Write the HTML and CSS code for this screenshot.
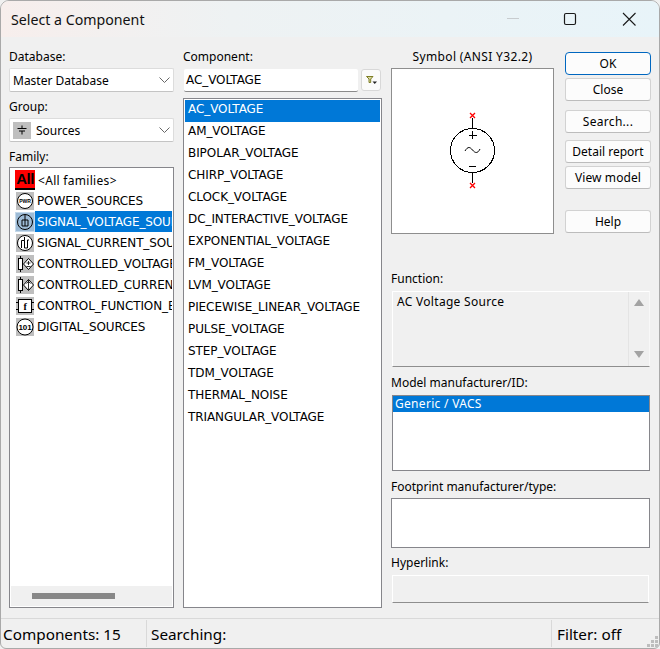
FILE: index.html
```html
<!DOCTYPE html>
<html lang="en">
<head>
<meta charset="utf-8">
<title>Select a Component</title>
<link rel="stylesheet" href="styles.css">
</head>
<body>
<div class="window">
  <header class="titlebar">
    <h1 class="title">Select a Component</h1>
    <div class="winbtns">
      <svg class="winbtn" width="58" height="36" viewBox="0 0 58 36"><path d="M23 17.500h12" stroke="#c8cccf" stroke-width="1"/></svg>
      <svg class="winbtn" width="58" height="36" viewBox="0 0 58 36"><rect x="22.500" y="12.500" width="11" height="11" rx="1.500" fill="none" stroke="#1a1a1a" stroke-width="1.200"/></svg>
      <svg class="winbtn" width="58" height="36" viewBox="0 0 58 36"><path d="M23 12l12.500 12.500M35.500 12L23 24.500" stroke="#1a1a1a" stroke-width="1.100" fill="none"/></svg>
    </div>
  </header>
  <main class="content">
    <section class="col-left">
      <label class="lbl lbl-first">Database:</label>
      <div class="combo"><span class="combo-text">Master Database</span><svg class="chev" width="11" height="6" viewBox="0 0 11 6"><path d="M.5.500l5 5 5-5" fill="none" stroke="#666" stroke-width="1"/></svg></div>
      <label class="lbl lbl-next">Group:</label>
      <div class="combo">
        <span class="group-icon"><svg width="18" height="17" viewBox="0 0 18 17"><path d="M9 3.500v3M4.500 6.500h9M6 9h6M9 9v3.500" stroke="#000" stroke-width="1" fill="none"/></svg></span>
        <span class="combo-text combo-text-icon">Sources</span>
        <svg class="chev" width="11" height="6" viewBox="0 0 11 6"><path d="M.5.500l5 5 5-5" fill="none" stroke="#666" stroke-width="1"/></svg>
      </div>
      <label class="lbl lbl-next">Family:</label>
      <div class="family">
        <ul class="family-list">
          <li class="fam"><span class="all-icon">All</span><span class="fam-text fam-all">&lt;All families&gt;</span></li>
          <li class="fam"><span class="ico"><svg width="18" height="18" viewBox="0 0 18 18"><circle cx="9" cy="9" r="7.500" fill="#fff" stroke="#000"/><text x="9" y="11" class="ico-txt">PWR</text></svg></span><span class="fam-text">POWER_SOURCES</span></li>
          <li class="fam sel"><span class="ico ico-sel"><svg width="18" height="18" viewBox="0 0 18 18"><circle cx="9" cy="9" r="7.500" fill="none" stroke="#000"/><path d="M9 2v5H6v6h3V7M9 13H12V7H9" fill="none" stroke="#000"/></svg></span><span class="fam-text">SIGNAL_VOLTAGE_SOURCES</span></li>
          <li class="fam"><span class="ico"><svg width="18" height="18" viewBox="0 0 18 18"><circle cx="9" cy="9" r="7.500" fill="#fff" stroke="#000"/><path d="M5.500 14V6.500h3V14M8.500 6.500V3M8.500 14h3V6h1.500" fill="none" stroke="#000"/></svg></span><span class="fam-text">SIGNAL_CURRENT_SOURCES</span></li>
          <li class="fam"><span class="ico"><svg width="18" height="18" viewBox="0 0 18 18"><rect x="2.500" y="3.500" width="4" height="11" fill="#fff" stroke="#000"/><path d="M4.500 1v2.500M4.500 14.500V17" stroke="#000"/><path d="M12.500 3.500L17.500 9 12.500 14.500 7.500 9z" fill="#fff" stroke="#000"/><path d="M10.500 8h4M12.500 6v4M10.500 11.500h4" stroke="#000" fill="none" stroke-width=".8"/></svg></span><span class="fam-text">CONTROLLED_VOLTAGE_SOURCES</span></li>
          <li class="fam"><span class="ico"><svg width="18" height="18" viewBox="0 0 18 18"><rect x="2.500" y="3.500" width="4" height="11" fill="#fff" stroke="#000"/><path d="M4.500 1v2.500M4.500 14.500V17" stroke="#000"/><path d="M12.500 3.500L17.500 9 12.500 14.500 7.500 9z" fill="#fff" stroke="#000"/><path d="M12.500 4v10M10.500 7.500l2-2 2 2" stroke="#000" fill="none" stroke-width=".8"/></svg></span><span class="fam-text">CONTROLLED_CURRENT_SOURCES</span></li>
          <li class="fam"><span class="ico"><svg width="18" height="18" viewBox="0 0 18 18"><rect x="2.500" y="2.500" width="13" height="13" fill="#fff" stroke="#000"/><path d="M0 5.500h2M16 5.500h2M0 12.500h2M16 12.500h2" stroke="#000"/><text x="9" y="13" class="ico-f">f</text></svg></span><span class="fam-text">CONTROL_FUNCTION_BLOCKS</span></li>
          <li class="fam"><span class="ico"><svg width="18" height="18" viewBox="0 0 18 18"><circle cx="9" cy="9" r="8" fill="#fff" stroke="#000"/><text x="9" y="12" class="ico-d">101</text></svg></span><span class="fam-text">DIGITAL_SOURCES</span></li>
        </ul>
        <div class="hscroll"><span class="hthumb"></span></div>
      </div>
    </section>

    <section class="col-mid">
      <label class="lbl lbl-first">Component:</label>
      <div class="search-row">
        <div class="edit">AC_VOLTAGE</div>
        <button class="filter-btn" type="button"><svg width="11" height="8" viewBox="0 0 11 8"><path d="M.5.500h6.500L4.700 3v3.500H3V3z" fill="#d8d8a0" stroke="#7d7d25" stroke-width="1"/><path d="M6.500 5.500h4.500L8.750 8z" fill="#222"/></svg></button>
      </div>
      <ul class="comp-list">
        <li class="comp sel">AC_VOLTAGE</li>
        <li class="comp">AM_VOLTAGE</li>
        <li class="comp">BIPOLAR_VOLTAGE</li>
        <li class="comp">CHIRP_VOLTAGE</li>
        <li class="comp">CLOCK_VOLTAGE</li>
        <li class="comp">DC_INTERACTIVE_VOLTAGE</li>
        <li class="comp">EXPONENTIAL_VOLTAGE</li>
        <li class="comp">FM_VOLTAGE</li>
        <li class="comp">LVM_VOLTAGE</li>
        <li class="comp">PIECEWISE_LINEAR_VOLTAGE</li>
        <li class="comp">PULSE_VOLTAGE</li>
        <li class="comp">STEP_VOLTAGE</li>
        <li class="comp">TDM_VOLTAGE</li>
        <li class="comp">THERMAL_NOISE</li>
        <li class="comp">TRIANGULAR_VOLTAGE</li>
      </ul>
    </section>

    <section class="col-right">
      <div class="top-right">
        <div class="symbol-col">
          <div class="symbol-title">Symbol (ANSI Y32.2)</div>
          <div class="symbol-box">
            <svg width="161" height="164" viewBox="0 0 161 164">
              <g class="sym-lines">
                <path d="M80.500 49v11M80.500 103v11" stroke="#000" fill="none"/>
                <circle cx="80.500" cy="81.500" r="22" fill="none" stroke="#000" stroke-width="1"/>
                <path d="M77 66.500h8M80.500 62v8M77 97.500h7" stroke="#000" fill="none"/>
              </g>
              <path d="M73 82c3-5 5-4 7.500-1s5 4 7.500-1" stroke="#000" fill="none"/>
              <path d="M78 44l5 5M83 44l-5 5M78 114l5 5M83 114l-5 5" stroke="#ff0000" stroke-width="1.300" fill="none"/>
            </svg>
          </div>
        </div>
        <div class="btn-col">
          <button class="btn btn-ok" type="button">OK</button>
          <button class="btn btn-close" type="button">Close</button>
          <button class="btn btn-search" type="button">Search...</button>
          <button class="btn btn-detail" type="button">Detail report</button>
          <button class="btn btn-view" type="button">View model</button>
          <button class="btn btn-help" type="button">Help</button>
        </div>
      </div>
      <label class="lbl lbl-func">Function:</label>
      <div class="func-box">
        <div class="func-text">AC Voltage Source</div>
        <div class="vscroll">
          <svg width="10" height="7" viewBox="0 0 10 7"><path d="M5 0l5 7H0z" fill="#a3a3a3"/></svg>
          <svg width="10" height="7" viewBox="0 0 10 7"><path d="M5 7L0 0h10z" fill="#a3a3a3"/></svg>
        </div>
      </div>
      <label class="lbl lbl-model">Model manufacturer/ID:</label>
      <ul class="model-box"><li class="model-row">Generic / VACS</li></ul>
      <label class="lbl lbl-foot">Footprint manufacturer/type:</label>
      <div class="foot-box"></div>
      <label class="lbl lbl-hyper">Hyperlink:</label>
      <div class="hyper-box"></div>
    </section>
  </main>
  <footer class="status">
    <div class="st st-comp">Components: 15</div>
    <div class="st st-search">Searching:</div>
    <div class="st st-filter">Filter: off</div>
    <svg class="grip" width="11" height="11" viewBox="0 0 11 11"><path d="M8 0h3v3H8zM4 4h3v3H4zM8 4h3v3H8zM0 8h3v3H0zM4 8h3v3H4zM8 8h3v3H8z" fill="#bdbdbd"/></svg>
  </footer>
</div>
</body>
</html>
```

FILE: styles.css
```css
* { box-sizing: border-box; }
html, body { margin: 0; padding: 0; background: #f0f0f0; }
ul { list-style: none; margin: 0; padding: 0; }
.window {
  width: 660px; height: 649px; overflow: hidden; display: flex; flex-direction: column;
  background: #f0f0f0; color: #000;
  font: 12px/16px "Noto Sans", "Liberation Sans", sans-serif;
  border: 1px solid #a9a9a9; border-radius: 9px 9px 6px 6px;
}
.titlebar {
  flex: 0 0 36px; display: flex; align-items: center; justify-content: space-between;
  background: linear-gradient(90deg, #f7eeec 0%, #eef2f3 35%, #e8f4f9 100%);
}
.title { margin: 1px 0 0 10px; font-size: 14.2px; font-weight: 400; line-height: 20px; color: #111; }
.winbtns { display: flex; margin-right: 1px; }
.winbtn { display: block; }
.content { flex: 0 0 581px; display: grid; grid-template-columns: 165px 199px 260px; column-gap: 9px; padding: 0 0 0 8px; }
.lbl { display: block; line-height: 16px; }
.lbl-first { margin-top: 12px; }
.lbl-next { margin-top: 7px; }
.combo {
  height: 24px; margin-top: 3px; display: flex; align-items: center;
  background: #fff; border: 1px solid #dcdcdc; border-bottom-color: #c4c4c4; border-radius: 2px; padding-left: 3px;
}
.combo-text { flex: 1; padding-top: 1px; }
.combo-text-icon { padding-left: 5px; }
.chev { margin-right: 3px; }
.group-icon { width: 18px; height: 17px; background: #bfbfbf; display: block; }
.group-icon svg { display: block; }
.family {
  margin-top: 2px; height: 441px; display: flex; flex-direction: column;
  background: #fff; border: 1px solid #86868b; padding: 1px;
}
.family-list { flex: 1; overflow: hidden; }
.fam { height: 21px; display: flex; align-items: center; padding-left: 5px; white-space: nowrap; overflow: hidden; font-family: "DejaVu Sans", sans-serif; letter-spacing: -.12px; }
.fam-text { display: block; flex: 1; min-width: 0; overflow: hidden; height: 21px; line-height: 23px; margin-left: 1px; padding-left: 2px; }
.fam-all { margin-left: 0; padding-left: 3px; font-family: "Noto Sans", sans-serif; letter-spacing: .3px; }
.fam.sel .fam-text { background: #0078d7; color: #fff; }
.ico { flex: 0 0 18px; height: 18px; background: #bebebe; display: block; }
.ico svg { display: block; }
.ico-sel { background: #9dbbd6; outline: 1px solid #c5d9ea; }
.all-icon {
  flex: 0 0 20px; height: 20px; margin-left: -1px; background: #ff0000; color: #000; border-bottom: 2px solid #000;
  font: 700 15px/17px "Liberation Sans", sans-serif; text-align: center; letter-spacing: -0.5px;
}
.ico-txt { font: 700 5px "Liberation Sans", sans-serif; text-anchor: middle; }
.ico-f { font: 700 10px "Liberation Serif", serif; text-anchor: middle; }
.ico-d { font: 700 8px "Liberation Sans", sans-serif; text-anchor: middle; }
.hscroll { flex: 0 0 20px; background: #f0f0f0; padding: 7px 0 0 21px; }
.hthumb { display: block; width: 83px; height: 6px; background: #888; }
.search-row { display: flex; margin-top: 3px; height: 24px; align-items: center; padding-left: 1px; }
.edit { width: 174px; height: 23px; background: #fff; border-bottom: 1px solid #8a8a8a; border-radius: 2px; padding: 3px 0 0 2px; font-family: "DejaVu Sans", sans-serif; letter-spacing: -.08px; }
.filter-btn {
  width: 20px; height: 22px; margin-left: 3px; padding: 0; display: flex; align-items: center; justify-content: center;
  background: #fbfbfb; border: 1px solid #d8d8d8; border-radius: 3px;
}
.comp-list { margin-top: 6px; height: 510px; background: #fff; border: 1px solid #86868b; padding: 1px; font-family: "DejaVu Sans", sans-serif; letter-spacing: -.08px; }
.comp { height: 22px; line-height: 18px; padding-left: 3px; }
.comp.sel { background: #0078d7; color: #fff; }
.top-right { display: flex; height: 218px; }
.symbol-col { width: 163px; }
.symbol-title { margin-top: 12px; text-align: center; line-height: 16px; letter-spacing: .35px; }
.symbol-box { margin-top: 3px; height: 166px; background: #fff; border: 1px solid #8e8e8e; }
.symbol-box svg { display: block; }
.sym-lines { shape-rendering: crispEdges; }
.btn-col { width: 86px; margin-left: 11px; display: flex; flex-direction: column; padding-top: 15px; }
.btn {
  flex: 0 0 23px; width: 86px; padding: 0; font: inherit; color: #000;
  background: #fcfcfc; border: 1px solid #d2d2d2; border-bottom-color: #bcbcbc; border-radius: 3px;
}
.btn-ok { border: 1px solid #0067c0; border-radius: 4px; }
.btn-close { margin-top: 3px; }
.btn-search { margin-top: 9px; letter-spacing: .3px; }
.btn-detail { margin-top: 7px; }
.btn-view { margin-top: 3px; letter-spacing: .1px; }
.btn-help { margin-top: 21px; }
.lbl-func { margin-top: 16px; }
.func-box {
  margin: 4px 1px 0 1px; height: 76px; display: flex;
  border: 1px solid #fff; border-bottom-color: #8e8e8e; border-right-color: #f8f8f8;
}
.func-text { flex: 1; padding: 2px 0 0 4px; letter-spacing: .3px; }
.vscroll { width: 21px; border-left: 1px solid #e4e4e4; display: flex; flex-direction: column; justify-content: space-between; align-items: center; padding: 7px 0 8px; }
.vscroll svg { display: block; }
.lbl-model { margin-top: 8px; }
.model-box { margin: 4px 1px 0 1px; height: 76px; background: #fff; border: 1px solid #86868b; }
.model-row { height: 16px; line-height: 16px; padding-left: 2px; background: #0078d7; color: #fff; letter-spacing: .3px; }
.lbl-foot { margin-top: 8px; }
.foot-box { margin-top: 3px; height: 50px; width: 259px; background: #fff; border: 1px solid #86868b; }
.lbl-hyper { margin-top: 7px; }
.hyper-box { margin: 4px 1px 0 1px; height: 28px; width: 257px; border: 1px solid #fff; border-bottom-color: #8e8e8e; }
.status {
  flex: 1; display: flex; align-items: center; position: relative;
  border-top: 1px solid #d9d9d9; font-size: 15.3px;
}
.st { height: 27px; line-height: 29px; padding-left: 2px; border-right: 1px solid #d9d9d9; white-space: nowrap; }
.st-comp { width: 146px; }
.st-search { width: 405px; padding-left: 4px; }
.st-filter { flex: 1; border-right: 0; padding-left: 5px; }
.grip { position: absolute; right: 1px; bottom: 1px; }
```
